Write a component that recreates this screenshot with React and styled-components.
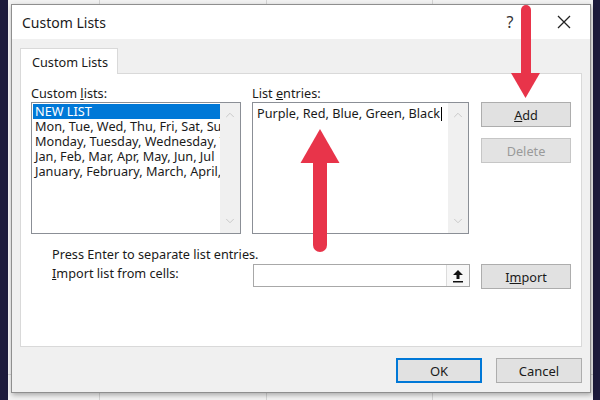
import styled, { createGlobalStyle } from 'styled-components';
import { ChevronUp, ChevronDown } from 'lucide-react';

const GlobalStyle = createGlobalStyle`
  body {
    margin: 0;
    background: #1c1a3b;
    font-family: "Noto Sans", "Open Sans", sans-serif;
  }
`;

const customLists = [
  'NEW LIST',
  'Mon, Tue, Wed, Thu, Fri, Sat, Sun',
  'Monday, Tuesday, Wednesday, Thursday',
  'Jan, Feb, Mar, Apr, May, Jun, Jul',
  'January, February, March, April, May',
];

const App = () => (
  <>
    <GlobalStyle />
    <Page>
      <Sheet>
        <Dialog>
          <TitleBar>
            <Title>Custom Lists</Title>
            <HelpButton>?</HelpButton>
            <CloseButton>
              <svg width="14" height="14" viewBox="0 0 14 14">
                <path d="M1 1 L13 13 M13 1 L1 13" stroke="#222" strokeWidth="1.3" />
              </svg>
            </CloseButton>
          </TitleBar>

          <Body>
            <TabStrip>
              <Tab>Custom Lists</Tab>
            </TabStrip>

            <Panel>
              <MainRow>
                <Column $width={210}>
                  <Label>Custom <u>l</u>ists:</Label>
                  <ListBox>
                    <Items>
                      {customLists.map((item, i) => (
                        <Item key={item} $selected={i === 0}>{item}</Item>
                      ))}
                    </Items>
                    <ScrollBar>
                      <ChevronUp size={14} strokeWidth={1.5} />
                      <ChevronDown size={14} strokeWidth={1.5} />
                    </ScrollBar>
                  </ListBox>
                </Column>

                <Column $width={217} $gap={11}>
                  <Label>List <u>e</u>ntries:</Label>
                  <ListBox>
                    <Entries>
                      Purple, Red, Blue, Green, Black<Caret />
                    </Entries>
                    <ScrollBar>
                      <ChevronUp size={14} strokeWidth={1.5} />
                      <ChevronDown size={14} strokeWidth={1.5} />
                    </ScrollBar>
                  </ListBox>
                </Column>

                <ButtonColumn>
                  <Button><u>A</u>dd</Button>
                  <Button $disabled>Delete</Button>
                </ButtonColumn>
              </MainRow>

              <Hint>Press Enter to separate list entries.</Hint>

              <ImportRow>
                <ImportLabel><u>I</u>mport list from cells:</ImportLabel>
                <RangeInput>
                  <RangeField />
                  <RangeButton>
                    <svg width="12" height="14" viewBox="0 0 12 14">
                      <path d="M6 1 L11 6 L7.5 6 L7.5 10 L4.5 10 L4.5 6 L1 6 Z" fill="#111" />
                      <rect x="1" y="12" width="10" height="1.5" fill="#111" />
                    </svg>
                  </RangeButton>
                </RangeInput>
                <Button>I<u>m</u>port</Button>
              </ImportRow>
            </Panel>

            <Footer>
              <FooterButton $primary>OK</FooterButton>
              <FooterButton>Cancel</FooterButton>
            </Footer>
          </Body>
        </Dialog>
      </Sheet>

      <Overlay width="600" height="400" viewBox="0 0 600 400">
        <line x1="526" y1="10" x2="526" y2="76" stroke="#e8344a" strokeWidth="10" strokeLinecap="round" />
        <polygon points="511,73 540,73 525.5,98" fill="#e8344a" />
        <line x1="320" y1="160" x2="320" y2="245" stroke="#e8344a" strokeWidth="14" strokeLinecap="round" />
        <polygon points="320,129 339.5,163 300.5,163" fill="#e8344a" />
      </Overlay>
    </Page>
  </>
);

export default App;

const Page = styled.div`
  position: relative;
  width: 600px;
  height: 400px;
  display: flex;
  padding: 0 7px 0 8px;
  box-sizing: border-box;
  background: #1c1a3b;
  overflow: hidden;
`;

const Sheet = styled.div`
  flex: 1;
  padding: 4px 0 0 3px;
  background:
    linear-gradient(#d4d4d4, #d4d4d4) 91px 0 / 1px 100% no-repeat,
    linear-gradient(#d4d4d4, #d4d4d4) 258px 0 / 1px 100% no-repeat,
    linear-gradient(#d4d4d4, #d4d4d4) 424px 0 / 1px 100% no-repeat,
    linear-gradient(#d4d4d4, #d4d4d4) 0 374px / 100% 1px no-repeat,
    #f2f2f2;
`;

const Dialog = styled.div`
  width: 580px;
  height: 389px;
  box-sizing: border-box;
  display: flex;
  flex-direction: column;
  border: 1px solid #8f8f8f;
  background: #f0f0f0;
  box-shadow: 1px 2px 5px rgba(0, 0, 0, 0.3);
  color: #1a1a1a;
  font-size: 12.7px;
`;

const TitleBar = styled.div`
  height: 34px;
  display: flex;
  align-items: center;
  padding: 0 4px 0 10px;
  background: #fff;
`;

const Title = styled.div`
  flex: 1;
  font-size: 14px;
  color: #1a1a1a;
`;

const HelpButton = styled.div`
  width: 28px;
  text-align: center;
  font-size: 16px;
  color: #333;
  margin-right: 18px;
`;

const CloseButton = styled.div`
  width: 44px;
  display: flex;
  justify-content: center;
  align-items: center;
`;

const Body = styled.div`
  flex: 1;
  display: flex;
  flex-direction: column;
  padding: 9px 8px 0 8px;
`;

const TabStrip = styled.div`
  display: flex;
  height: 25px;
`;

const Tab = styled.div`
  width: 98px;
  box-sizing: border-box;
  height: 26px;
  padding: 4px 0 0 11px;
  background: #fff;
  border: 1px solid #d9d9d9;
  border-bottom: none;
  font-size: 12.7px;
  position: relative;
  z-index: 1;
`;

const Panel = styled.div`
  height: 274px;
  box-sizing: border-box;
  border: 1px solid #d9d9d9;
  background: #fff;
  padding: 11px 10px 0 10px;
`;

const MainRow = styled.div`
  display: flex;
  align-items: flex-start;
`;

const Column = styled.div`
  width: ${p => p.$width}px;
  margin-left: ${p => p.$gap || 0}px;
  display: flex;
  flex-direction: column;
`;

const Label = styled.div`
  height: 16px;
  line-height: 16px;
  margin-bottom: 1px;
  white-space: nowrap;
`;

const ListBox = styled.div`
  height: 132px;
  box-sizing: border-box;
  display: flex;
  border: 1px solid #8b8f96;
  background: #fff;
`;

const Items = styled.div`
  flex: 1;
  min-width: 0;
  padding: 1px 0 1px 1px;
  overflow: hidden;
`;

const Item = styled.div`
  height: 15px;
  line-height: 15px;
  padding-left: 2px;
  white-space: nowrap;
  overflow: hidden;
  background: ${p => (p.$selected ? '#0078d7' : 'transparent')};
  color: ${p => (p.$selected ? '#fff' : '#1a1a1a')};
`;

const Entries = styled.div`
  flex: 1;
  min-width: 0;
  padding: 3px 4px;
  line-height: 15px;
  white-space: nowrap;
  overflow: hidden;
`;

const Caret = styled.span`
  display: inline-block;
  width: 1px;
  height: 14px;
  margin-left: 1px;
  vertical-align: -3px;
  background: #000;
`;

const ScrollBar = styled.div`
  width: 20px;
  flex-shrink: 0;
  display: flex;
  flex-direction: column;
  justify-content: space-between;
  align-items: center;
  padding: 5px 0 5px;
  background: #f0f0f0;
  color: #c3c3c3;
`;

const ButtonColumn = styled.div`
  width: 90px;
  margin-left: 12px;
  padding-top: 17px;
  display: flex;
  flex-direction: column;
  gap: 11px;
`;

const Button = styled.div`
  width: 90px;
  height: 25px;
  box-sizing: border-box;
  flex-shrink: 0;
  display: flex;
  align-items: center;
  justify-content: center;
  border: 1px solid ${p => (p.$disabled ? '#c6c6c6' : '#adadad')};
  background: ${p => (p.$disabled ? '#e3e3e3' : '#e1e1e1')};
  color: ${p => (p.$disabled ? '#9a9a9a' : '#1a1a1a')};
`;

const Hint = styled.div`
  margin: 12px 0 0 21px;
  line-height: 16px;
`;

const ImportRow = styled.div`
  display: flex;
  align-items: flex-start;
  margin-top: 2px;
  padding-left: 21px;
`;

const ImportLabel = styled.div`
  width: 201px;
  line-height: 16px;
  padding-top: 1px;
`;

const RangeInput = styled.div`
  width: 218px;
  height: 23px;
  box-sizing: border-box;
  display: flex;
  border: 1px solid #a8a8a8;
  background: #fff;
  margin-right: 11px;
`;

const RangeField = styled.div`
  flex: 1;
`;

const RangeButton = styled.div`
  width: 22px;
  display: flex;
  align-items: center;
  justify-content: center;
  border-left: 1px solid #dcdcdc;
  background: #f7f7f7;
`;

const Footer = styled.div`
  display: flex;
  justify-content: flex-end;
  gap: 14px;
  padding-top: 11px;
`;

const FooterButton = styled.div`
  width: 86px;
  height: 25px;
  box-sizing: border-box;
  display: flex;
  align-items: center;
  justify-content: center;
  background: #e1e1e1;
  border: ${p => (p.$primary ? '2px solid #0078d7' : '1px solid #adadad')};
  font-size: 13px;
`;

const Overlay = styled.svg`
  position: absolute;
  top: 0;
  left: 0;
  pointer-events: none;
`;
